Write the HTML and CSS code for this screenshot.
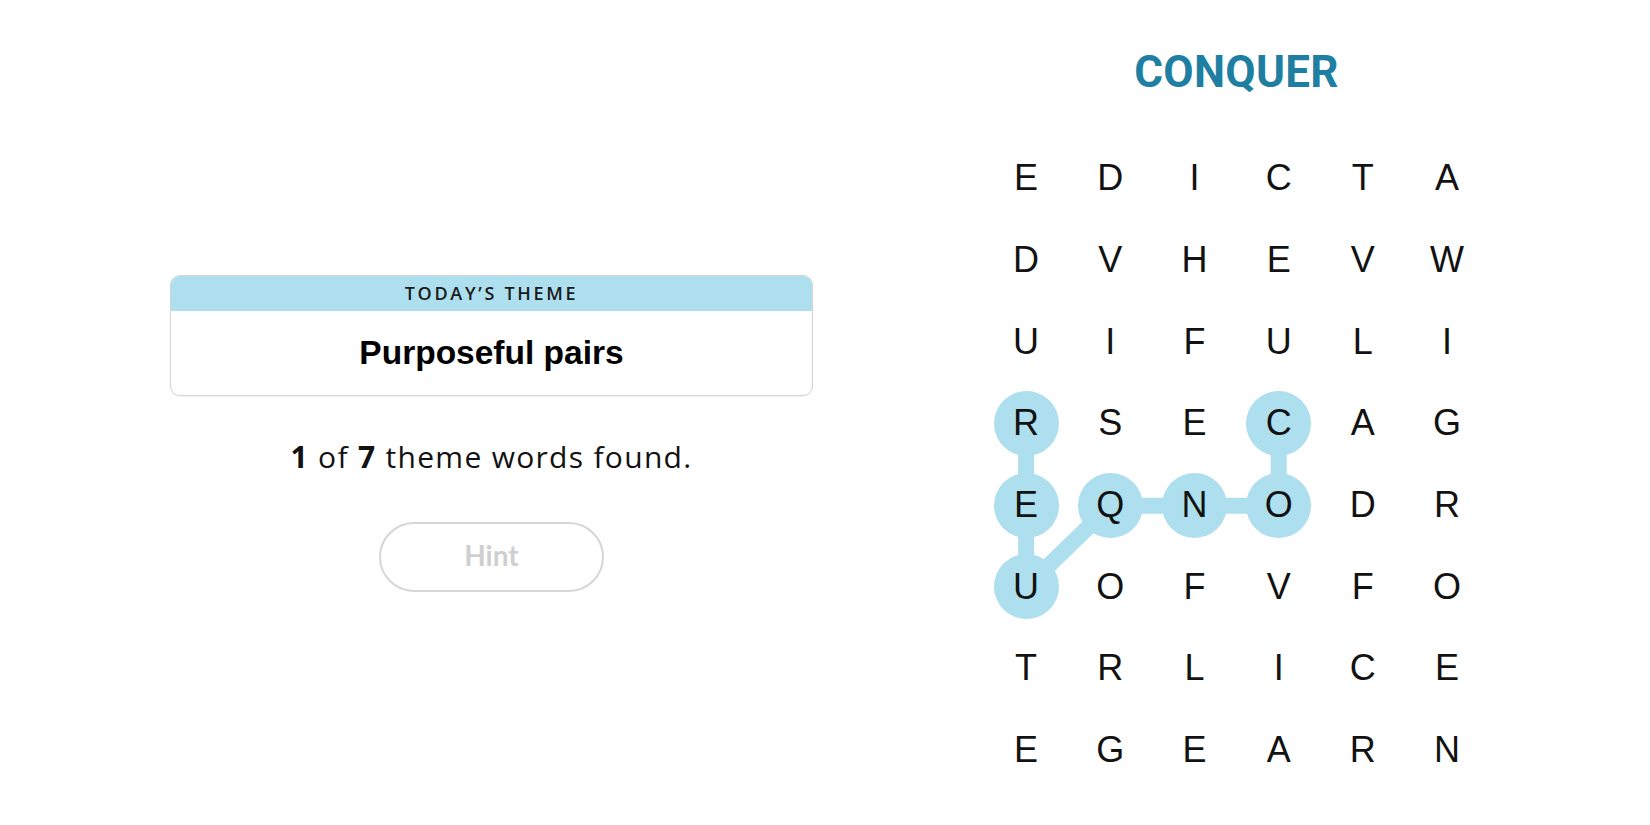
FILE: index.html
```html
<!DOCTYPE html>
<html lang="en">
<head>
<meta charset="utf-8">
<title>Strands</title>
<link rel="stylesheet" href="styles.css">
</head>
<body>
<main class="page">
  <section class="side">
    <div class="theme-card">
      <div class="theme-head">TODAY’S THEME</div>
      <div class="theme-body">Purposeful pairs</div>
    </div>
    <p class="count"><b>1</b> of <b>7</b> theme words found.</p>
    <button class="hint" type="button">Hint</button>
  </section>
  <section class="play">
    <h1 class="word">CONQUER</h1>
    <div class="board">
      <svg class="links" width="505" height="654" viewBox="0 0 505 654" aria-hidden="true">
        <polyline points="42.1,286 42.1,367.7 42.1,449.4 126.3,367.7 210.5,367.7 294.7,367.7 294.7,286" fill="none" stroke="#aedfee" stroke-width="16" stroke-linejoin="round" stroke-linecap="round"/>
      </svg>
      <div class="cell"><span>E</span></div><div class="cell"><span>D</span></div><div class="cell"><span>I</span></div><div class="cell"><span>C</span></div><div class="cell"><span>T</span></div><div class="cell"><span>A</span></div>
      <div class="cell"><span>D</span></div><div class="cell"><span>V</span></div><div class="cell"><span>H</span></div><div class="cell"><span>E</span></div><div class="cell"><span>V</span></div><div class="cell"><span>W</span></div>
      <div class="cell"><span>U</span></div><div class="cell"><span>I</span></div><div class="cell"><span>F</span></div><div class="cell"><span>U</span></div><div class="cell"><span>L</span></div><div class="cell"><span>I</span></div>
      <div class="cell sel"><span>R</span></div><div class="cell"><span>S</span></div><div class="cell"><span>E</span></div><div class="cell sel"><span>C</span></div><div class="cell"><span>A</span></div><div class="cell"><span>G</span></div>
      <div class="cell sel"><span>E</span></div><div class="cell sel"><span>Q</span></div><div class="cell sel"><span>N</span></div><div class="cell sel"><span>O</span></div><div class="cell"><span>D</span></div><div class="cell"><span>R</span></div>
      <div class="cell sel"><span>U</span></div><div class="cell"><span>O</span></div><div class="cell"><span>F</span></div><div class="cell"><span>V</span></div><div class="cell"><span>F</span></div><div class="cell"><span>O</span></div>
      <div class="cell"><span>T</span></div><div class="cell"><span>R</span></div><div class="cell"><span>L</span></div><div class="cell"><span>I</span></div><div class="cell"><span>C</span></div><div class="cell"><span>E</span></div>
      <div class="cell"><span>E</span></div><div class="cell"><span>G</span></div><div class="cell"><span>E</span></div><div class="cell"><span>A</span></div><div class="cell"><span>R</span></div><div class="cell"><span>N</span></div>
    </div>
  </section>
</main>
</body>
</html>
```
FILE: styles.css
```css
* { box-sizing: border-box; }

html, body {
  margin: 0;
  padding: 0;
  background: #ffffff;
}

body {
  width: 1650px;
  height: 825px;
  overflow: hidden;
  font-family: "Liberation Sans", Arial, sans-serif;
  color: #121212;
}

.page {
  display: flex;
  align-items: flex-start;
  padding-left: 170px;
  gap: 171px;
}

/* left panel */
.side {
  width: 643px;
  margin-top: 275px;
  display: flex;
  flex-direction: column;
  align-items: center;
}

.theme-card {
  width: 100%;
  border: 1px solid #d4d4d4;
  border-radius: 10px;
  overflow: hidden;
  box-shadow: 0 1px 2px rgba(0, 0, 0, 0.06);
}

.theme-head {
  height: 35px;
  background: #aedfee;
  font-family: "Open Sans", "Liberation Sans", sans-serif;
  font-weight: 600;
  font-size: 18px;
  letter-spacing: 2.7px;
  line-height: 35px;
  text-align: center;
  color: #1a1a1a;
}

.theme-body {
  height: 84px;
  display: flex;
  align-items: center;
  justify-content: center;
  font-family: "Liberation Sans", Arial, sans-serif;
  font-weight: 700;
  font-size: 33.5px;
  color: #000;
}

.count {
  margin: 41px 0 0;
  font-family: "Open Sans", "Liberation Sans", sans-serif;
  font-size: 30px;
  letter-spacing: 1.3px;
  line-height: 40px;
  color: #121212;
}

.count b { font-weight: 700; }

.hint {
  margin-top: 45px;
  width: 225px;
  height: 70px;
  border: 2px solid #d6d6d6;
  border-radius: 35px;
  background: #fff;
  font-family: Lato, "Liberation Sans", sans-serif;
  font-weight: 700;
  font-size: 28px;
  color: #cfcfcf;
  padding: 0 0 4px;
}

/* right panel */
.play {
  width: 505px;
  display: flex;
  flex-direction: column;
  align-items: center;
}

.word {
  margin: 47px 0 0;
  font-family: Roboto, "Liberation Sans", sans-serif;
  font-weight: 700;
  font-size: 44px;
  line-height: 50px;
  color: #1e7fa3;
  letter-spacing: 0.3px;
}

.board {
  position: relative;
  margin-top: 40.5px;
  width: 505px;
  display: grid;
  grid-template-columns: repeat(6, 84.2px);
  grid-auto-rows: 81.7px;
}

.links {
  position: absolute;
  left: 0;
  top: 0;
}

.cell {
  position: relative;
  display: flex;
  align-items: center;
  justify-content: center;
}

.cell span {
  width: 65px;
  height: 65px;
  border-radius: 50%;
  display: flex;
  align-items: center;
  justify-content: center;
  font-family: "Liberation Sans", Arial, sans-serif;
  font-size: 36px;
  font-weight: 400;
  color: #121212;
}

.cell.sel span {
  background: #aedfee;
}
```
